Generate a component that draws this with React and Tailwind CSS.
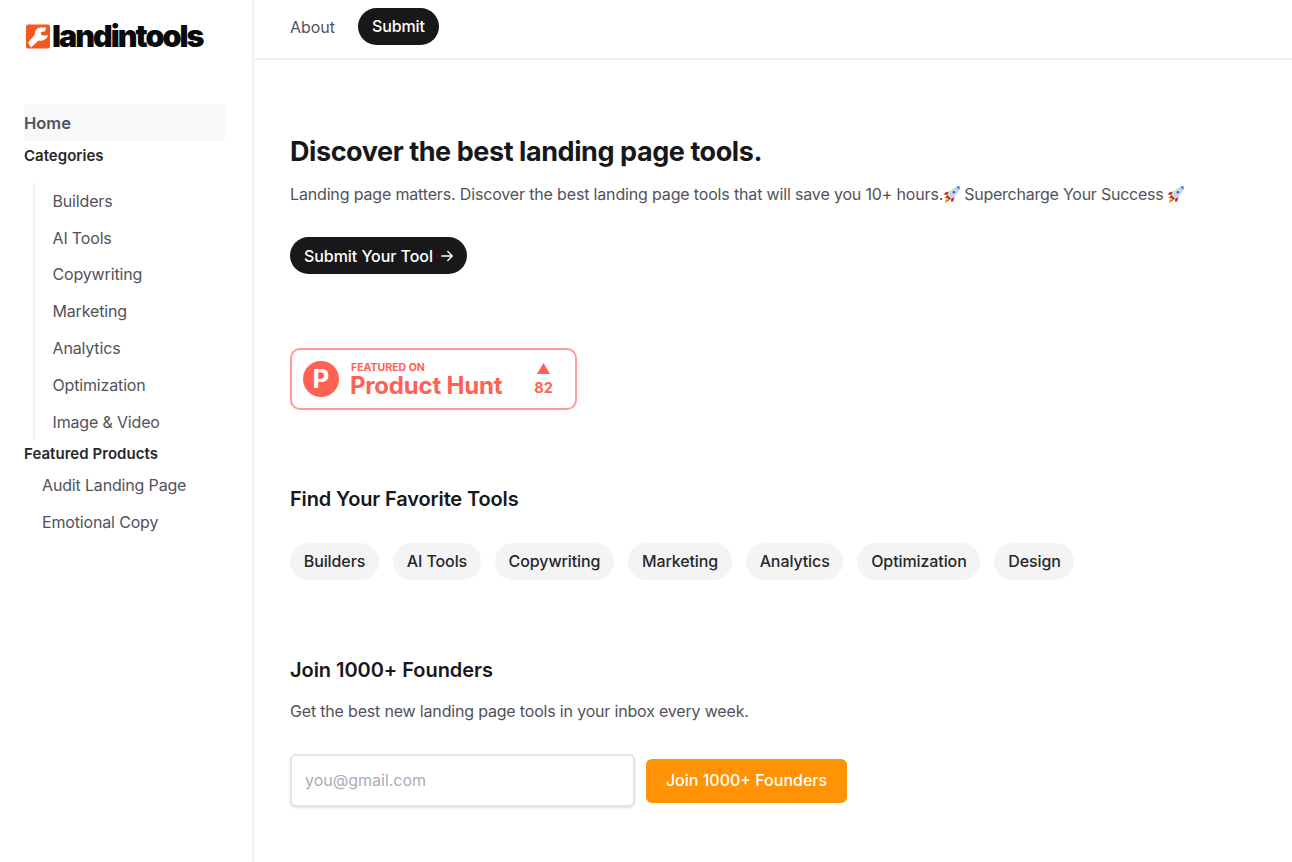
import React from "react";

const Rocket = ({ className }) => (
  <svg viewBox="0 0 18 18" className={className} aria-hidden="true">
    <path d="M5 10 1 13c1.500 0 2.300.4 2.500 1L1.500 17.500c2.800-.6 4.800-1.700 6-3.500z" fill="#f97316" />
    <path d="M4.800 12.200 3.200 15.200l3-1.400z" fill="#fde047" />
    <path d="M6 6.500 2 7.500 1.200 9.800 4.500 10z" fill="#dc2626" />
    <path d="M11.500 12l-1 4-2.300 1L8 13.500z" fill="#dc2626" />
    <path d="M4.200 10.200C7 5 11 1.800 16.800 1.200 16.400 7 13 11 7.800 13.800z" fill="#d1d5db" />
    <path d="M12.800 1.900c1.300.4 2.700 1.700 3.400 3.300.4-1.200.5-2.600.6-4-1.500.1-2.800.3-4 .7z" fill="#3b82f6" />
    <circle cx="10.800" cy="7.200" r="1.800" fill="#2563eb" stroke="#f3f4f6" strokeWidth=".7" />
    <path d="M4.200 10.200 7.800 13.800 6.400 14.600 3.400 11.600z" fill="#374151" />
  </svg>
);

const cats = ["Builders", "AI Tools", "Copywriting", "Marketing", "Analytics", "Optimization", "Image & Video"];
const pills = ["Builders", "AI Tools", "Copywriting", "Marketing", "Analytics", "Optimization", "Design"];

export default function App() {
  return (
    <div className="flex h-[862px] w-full overflow-hidden bg-white font-['Inter',sans-serif] text-[#18181b]">
      <aside className="w-[254px] shrink-0 border-r-2 border-[#f1f1f3] pl-6 pr-[27px]">
        <div className="flex h-[104px] items-start pt-[21px]">
          <svg viewBox="0 0 26 25" className="mt-[3px] ml-[1px] h-[25px] w-[26px] shrink-0" aria-hidden="true">
            <rect x="1" y="0.5" width="24" height="24" rx="2" fill="#f4591f" />
            <path d="M21 3.500H16C12 3.500 9.500 6.500 10 10.500L3 18.500 6 23.500 13.500 16.500C18 17.500 21.500 15.500 23 11.500H18.500C16.500 11.500 15.500 10 16 8.800 16.400 7.800 17.200 7.500 18 7.500H20Z" fill="#fff" />
          </svg>
          <span className="ml-[1px] text-[30.500px] leading-[30px] font-black tracking-[-2px] text-[#0a0a0a]">landintools</span>
        </div>
        <nav>
          <div className="flex h-[37px] items-center bg-[#f8f8fa] pt-[1px] text-[16.500px] font-semibold text-[#52525b]">Home</div>
          <div className="mt-[4px] h-[21px] text-[15px] leading-[21px] font-semibold tracking-[0.02px] text-[#27272a]">Categories</div>
          <ul className="mt-[16.500px] ml-[9px] border-l-2 border-[#f1f1f3]">
            {cats.map((c) => (
              <li key={c} className="flex h-[36.800px] items-center pl-[17.500px] text-base tracking-[-0.16px] text-[#52525b]">{c}</li>
            ))}
          </ul>
          <div className="h-[27px] text-[15px] leading-[27px] font-semibold tracking-[0.05px] text-[#27272a]">Featured Products</div>
          <ul>
            {["Audit Landing Page", "Emotional Copy"].map((c) => (
              <li key={c} className="flex h-[36.800px] items-center pl-[18px] text-base tracking-[-0.16px] text-[#52525b]">{c}</li>
            ))}
          </ul>
        </nav>
      </aside>
      <main className="min-w-0 flex-1">
        <header className="flex h-[60px] items-start gap-[23px] border-b-2 border-[#f1f1f3] pt-2 pl-[36px]">
          <a className="flex h-[37px] items-center pt-[1px] text-base tracking-[-0.05px] text-[#52525b]">About</a>
          <a className="flex h-[37px] items-center rounded-full bg-[#18181b] px-[14px] pb-[1px] text-base font-medium tracking-[-0.1px] text-white">Submit</a>
        </header>
        <div className="pl-[36px]">
          <h1 className="mt-[74px] text-[27px] leading-[36px] font-bold tracking-[-0.430px] text-[#18181b]">Discover the best landing page tools.</h1>
          <p className="mt-[12px] flex h-6 items-center text-base tracking-[-0.16px] text-[#52525b]">
            Landing page matters. Discover the best landing page tools that will save you 10+ hours.
            <Rocket className="h-[18px] w-[18px]" />
            <span className="ml-[3px] tracking-[-0.24px]">Supercharge Your Success</span>
            <Rocket className="ml-[4px] h-[18px] w-[18px]" />
          </p>
          <a className="mt-[31px] inline-flex h-[37px] items-center gap-[8px] rounded-full bg-[#18181b] px-[14px] text-base font-medium tracking-[-0.06px] text-white">
            Submit Your Tool
            <svg viewBox="0 0 16 16" className="h-3 w-3" fill="none" stroke="currentColor" strokeWidth="1.700" strokeLinecap="round" strokeLinejoin="round" aria-hidden="true">
              <path d="M1 8h14M9 2l6 6-6 6" />
            </svg>
          </a>
          <div className="mt-[74px] flex h-[62px] w-[287px] items-center rounded-[10px] border-2 border-[#ff9c93] bg-white text-[#ff6154]">
            <div className="ml-[11px] flex h-9 w-9 items-center justify-center rounded-full bg-[#ff6154] text-[26px] leading-none font-bold text-white">P</div>
            <div className="ml-[11px] flex flex-col pt-[2px]">
              <span className="ml-[1px] text-[10.500px] leading-[11px] font-bold tracking-[0.02px]">FEATURED ON</span>
              <span className="text-[24px] leading-[26px] font-bold tracking-[-0.2px]">Product Hunt</span>
            </div>
            <div className="ml-[32px] flex flex-col items-center">
              <svg viewBox="0 0 13 11" className="h-[11px] w-[13px]" aria-hidden="true"><path d="M6.500 0 13 11H0z" fill="#ff6154" /></svg>
              <span className="mt-[6px] text-[14.500px] leading-[16px] font-bold">82</span>
            </div>
          </div>
          <h2 className="mt-[75px] text-[20px] leading-[29px] font-semibold tracking-[-0.14px] text-[#18181b]">Find Your Favorite Tools</h2>
          <div className="mt-[29px] flex gap-[14px]">
            {pills.map((p) => (
              <span key={p} className="flex h-[37px] items-center rounded-full bg-[#f4f4f5] px-[13.750px] pb-[1px] text-base font-medium tracking-[-0.1px] text-[#27272a]">{p}</span>
            ))}
          </div>
          <h2 className="mt-[75px] text-[20px] leading-[30px] font-semibold tracking-[-0.05px] text-[#18181b]">Join 1000+ Founders</h2>
          <p className="mt-[14px] text-base leading-6 tracking-[-0.18px] text-[#52525b]">Get the best new landing page tools in your inbox every week.</p>
          <div className="mt-[31px] flex items-center gap-[11px]">
            <input readOnly placeholder="you@gmail.com" className="h-[53px] w-[345px] rounded-md border-2 border-[#e2e4ea] bg-white pr-[14px] pb-[1px] pl-[13px] text-base shadow-sm outline-none placeholder:text-[#a9adb8]" />
            <button className="h-[44px] w-[201px] rounded-md bg-[#ff9205] pb-[1px] text-base font-medium text-white">Join 1000+ Founders</button>
          </div>
        </div>
      </main>
    </div>
  );
}
